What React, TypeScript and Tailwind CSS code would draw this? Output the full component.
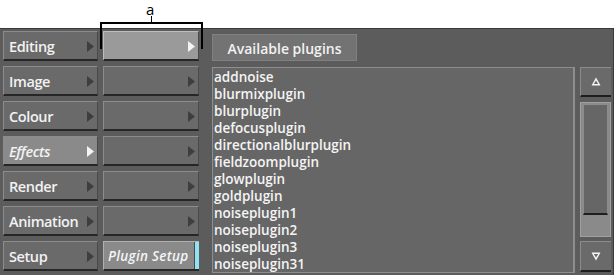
const menu = [
  { label: "Editing", sel: false },
  { label: "Image", sel: false },
  { label: "Colour", sel: false },
  { label: "Effects", sel: true },
  { label: "Render", sel: false },
  { label: "Animation", sel: false },
  { label: "Setup", sel: false },
];

const plugins = [
  "addnoise",
  "blurmixplugin",
  "blurplugin",
  "defocusplugin",
  "directionalblurplugin",
  "fieldzoomplugin",
  "glowplugin",
  "goldplugin",
  "noiseplugin1",
  "noiseplugin2",
  "noiseplugin3",
  "noiseplugin31",
];

function Arrow({ light }: { light?: boolean }) {
  return (
    <svg width="7" height="11" viewBox="0 0 7 11" className="shrink-0">
      <path d="M0 0 L7 5.5 L0 11 Z" fill={light ? "#f4f4f4" : "#3e3e3e"} />
    </svg>
  );
}

function MenuButton({ label, sel }: { label: string; sel: boolean }) {
  return (
    <div
      className={
        "h-[30px] flex items-center justify-between pl-[5px] pr-[3px] pt-[2px] border-t border-l border-[#8c8c8c] border-r border-r-[#4a4a4a] border-b-2 border-b-[#262626] " +
        (sel ? "bg-[#8a8a8a]" : "bg-[#6a6a6a]")
      }
    >
      <span
        className={
          "text-[14.5px] text-[#f2f2f2] font-semibold tracking-[-0.4px] " + (sel ? "italic" : "")
        }
      >
        {label}
      </span>
      <Arrow light={sel} />
    </div>
  );
}

function SubButton({ sel }: { sel: boolean }) {
  return (
    <div
      className={
        "h-[30px] flex items-center justify-end pr-[3px] pt-[2px] border-t border-l border-r border-r-[#4a4a4a] border-b-2 border-b-[#262626] " +
        (sel ? "bg-[#9a9a9a] border-[#bdbdbd]" : "bg-[#6a6a6a] border-[#8c8c8c]")
      }
    >
      <Arrow light={sel} />
    </div>
  );
}

export default function App() {
  return (
    <div
      className="w-[615px] h-[277px] bg-white relative overflow-hidden"
      style={{ fontFamily: '"Open Sans", "DejaVu Sans", sans-serif' }}
    >
      <div className="h-[28px]" />
      <div className="w-[614px] h-[247px] bg-[#5c5c5c] border-t border-r border-[#3a3a3a] flex">
        <div className="w-[95px] ml-[3px] mt-[2px] flex flex-col gap-[5px]">
          {menu.map((m) => (
            <MenuButton key={m.label} label={m.label} sel={m.sel} />
          ))}
        </div>

        <div className="w-[96px] ml-[5px] mt-[2px] flex flex-col gap-[5px]">
          {[0, 1, 2, 3, 4, 5].map((i) => (
            <SubButton key={i} sel={i === 0} />
          ))}
          <div className="h-[30px] flex items-center pt-[2px] bg-[#8a8a8a] border-t border-l border-[#b0b0b0] border-b-2 border-b-[#262626]">
            <span className="flex-1 pl-[4px] text-[13.5px] italic font-semibold text-[#f4f4f4] tracking-[0.3px] whitespace-nowrap">
              Plugin Setup
            </span>
            <div className="w-[5px] self-stretch -mt-[2px] bg-[#8fe3f2] border-l border-[#4a4a4a]" />
          </div>
        </div>

        <div className="ml-[13px] mt-[5px] flex flex-col">
          <div className="w-[145px] h-[27px] pt-[1px] bg-[#737373] border border-[#808080] flex items-center justify-center text-[14px] font-semibold text-[#f2f2f2]">
            Available plugins
          </div>
          <div className="flex mt-[6px] gap-[5px]">
            <div className="w-[363px] h-[206px] bg-[#666666] border border-[#8e8e8e] border-r-2 pl-[1px] pt-[1px] overflow-hidden">
              {plugins.map((p) => (
                <div key={p} className="text-[13.5px] leading-[17px] font-semibold text-[#f4f4f4]">
                  {p}
                </div>
              ))}
            </div>
            <div className="w-[31px] h-[206px] flex flex-col">
              <div className="h-[30px] bg-[#6a6a6a] border-t border-l border-[#8c8c8c] border-b-2 border-b-[#1e1e1e] flex items-center justify-center">
                <svg width="10" height="9" viewBox="0 0 10 9">
                  <path d="M5 0.5 L9.5 8.5 L0.5 8.5 Z" fill="#f4f4f4" />
                  <path d="M5 3.5 L7.2 7 L2.8 7 Z" fill="#6a6a6a" />
                </svg>
              </div>
              <div className="mt-[5px] h-[135px] bg-[#8a8a8a] border border-[#a0a0a0] flex flex-col">
                <div className="mx-[2px] mt-[1px] h-[111px] bg-[#666666] border border-[#8c8c8c] border-b-2 border-b-[#1e1e1e]" />
              </div>
              <div className="mt-[4px] h-[31px] bg-[#6a6a6a] border-t border-l border-[#8c8c8c] border-b-2 border-b-[#1e1e1e] flex items-center justify-center">
                <svg width="10" height="9" viewBox="0 0 10 9">
                  <path d="M0.5 0.5 L9.5 0.5 L5 8.5 Z" fill="#f4f4f4" />
                  <path d="M2.8 2 L7.2 2 L5 5.5 Z" fill="#6a6a6a" />
                </svg>
              </div>
            </div>
          </div>
        </div>
      </div>

      {/* callout "a" */}
      <div className="absolute left-[146px] top-0 text-[15px] leading-[18px] text-black">a</div>
      <div className="absolute left-[151px] top-[16px] w-[1px] h-[7px] bg-black" />
      <div className="absolute left-[100px] top-[22px] w-[103px] h-[2px] bg-black" />
      <div className="absolute left-[100px] top-[22px] w-[2px] h-[27px] bg-black" />
      <div className="absolute left-[201px] top-[22px] w-[2px] h-[27px] bg-black" />
    </div>
  );
}
